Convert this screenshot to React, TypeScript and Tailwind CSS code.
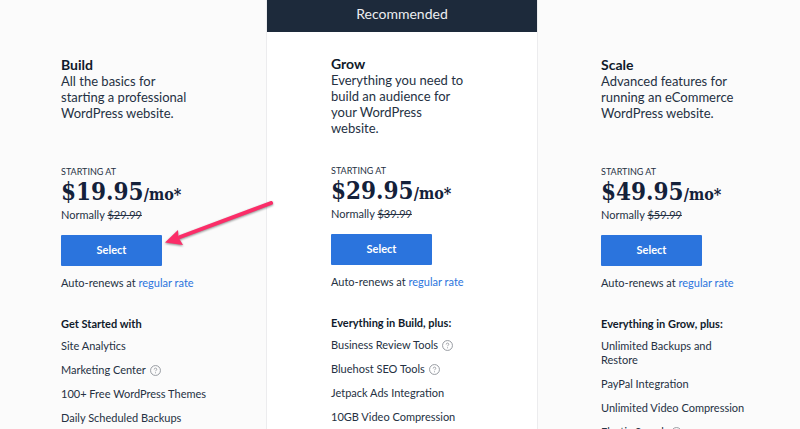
import React from 'react';
import { clsx } from 'clsx';

interface Feature {
  label: string;
  hint?: boolean;
}

interface Plan {
  name: string;
  description: string;
  price: string;
  normally: string;
  heading: string;
  features: Feature[];
  recommended?: boolean;
}

const plans: Plan[] = [
  {
    name: 'Build',
    description: 'All the basics for\nstarting a professional\nWordPress website.',
    price: '$19.95',
    normally: '$29.99',
    heading: 'Get Started with',
    features: [
      { label: 'Site Analytics' },
      { label: 'Marketing Center', hint: true },
      { label: '100+ Free WordPress Themes' },
      { label: 'Daily Scheduled Backups' },
    ],
  },
  {
    name: 'Grow',
    description: 'Everything you need to\nbuild an audience for\nyour WordPress\nwebsite.',
    price: '$29.95',
    normally: '$39.99',
    heading: 'Everything in Build, plus:',
    features: [
      { label: 'Business Review Tools', hint: true },
      { label: 'Bluehost SEO Tools', hint: true },
      { label: 'Jetpack Ads Integration' },
      { label: '10GB Video Compression' },
    ],
    recommended: true,
  },
  {
    name: 'Scale',
    description: 'Advanced features for\nrunning an eCommerce\nWordPress website.',
    price: '$49.95',
    normally: '$59.99',
    heading: 'Everything in Grow, plus:',
    features: [
      { label: 'Unlimited Backups and\nRestore' },
      { label: 'PayPal Integration' },
      { label: 'Unlimited Video Compression' },
      { label: 'Elastic Search', hint: true },
    ],
  },
];

const HintIcon: React.FC = () => (
  <svg viewBox="0 0 10 10" className="h-[11px] w-[11px] shrink-0" fill="none" stroke="#8b8f96" aria-hidden="true">
    <circle cx="5" cy="5" r="4.5" strokeWidth="0.8" />
    <path d="M3.8 4.1c0-.8.5-1.3 1.2-1.3s1.2.5 1.2 1.1c0 .9-1.2.9-1.2 1.8" strokeWidth="0.7" />
    <path d="M5 6.7v.8" strokeWidth="0.8" />
  </svg>
);

const PlanColumn: React.FC<{ plan: Plan }> = ({ plan }) => (
  <section
    className={clsx(
      plan.recommended && 'bg-white shadow-[0_0_0_1px_#ececee]',
      !plan.recommended && 'pt-[33px]'
    )}
  >
    {plan.recommended && (
      <div className="h-8 bg-[#1d2a3b] text-center text-[14px] leading-7 text-[#eceef1]">Recommended</div>
    )}

    <div className="px-16 pt-6">
      <h2 className="text-[14px] leading-4 font-bold text-[#101a2b]">{plan.name}</h2>
      <p className="h-[92px] text-[13px] leading-4 whitespace-pre">{plan.description}</p>

      <p className="text-[9px] leading-[14px]">STARTING AT</p>
      <p className="font-['DejaVu_Serif_Condensed','DejaVu_Serif',serif] text-[24px] leading-[26px] font-bold whitespace-nowrap text-[#14213a]">
        {plan.price}
        <span className="text-[16px]">/mo*</span>
      </p>
      <p className="text-[11px] leading-[14px]">
        Normally <s>{plan.normally}</s>
      </p>

      <button className="mt-[13px] h-[31px] w-[101px] rounded-[1px] bg-[#2b74dd] text-[11px] font-bold text-white">
        Select
      </button>

      <p className="pt-2.5 text-[11px] leading-[14px]">
        Auto-renews at{' '}
        <a href="#" className="text-[#2b74dd]">
          regular rate
        </a>
      </p>

      <h3 className="pt-[27px] text-[11px] leading-[14px] font-bold whitespace-nowrap text-[#101a2b]">{plan.heading}</h3>
      <ul className="mt-2 space-y-2.5 text-[11px] leading-[14px] whitespace-pre">
        {plan.features.map((feature) => (
          <li key={feature.label} className="flex items-center gap-1">
            {feature.label}
            {feature.hint && <HintIcon />}
          </li>
        ))}
      </ul>
    </div>
  </section>
);

const App: React.FC = () => {
  return (
    <main className="relative h-screen overflow-hidden bg-[#fbfbfb] font-['Lato',sans-serif] text-[#253143]">
      <div className="-mr-[7px] -ml-[3px] grid h-full grid-cols-3">
        {plans.map((plan) => (
          <PlanColumn key={plan.name} plan={plan} />
        ))}
      </div>

      {/* Callout arrow pointing at the first Select button */}
      <svg viewBox="0 0 112 50" className="absolute top-[198px] left-[164px] h-[50px] w-28 drop-shadow-[0_1px_1px_rgba(0,0,0,0.45)]" aria-hidden="true">
        <path d="M107 5L16 39" stroke="#fb2d68" strokeWidth="4" strokeLinecap="round" />
        <path d="M1 44.5L14 32L14.5 39.5L19 47Z" fill="#fb2d68" />
      </svg>
    </main>
  );
};

export default App;
